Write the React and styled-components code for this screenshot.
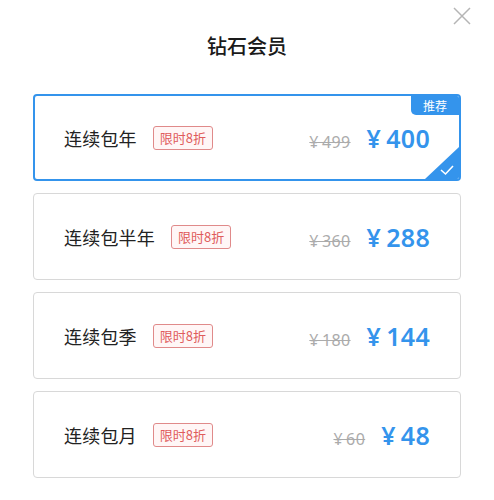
import React from "react";
import styled, { createGlobalStyle } from "styled-components";

const Global = createGlobalStyle`
  html, body { margin: 0; padding: 0; background: #fff; }
  body { font-family: "Noto Sans", "Noto Sans CJK SC", sans-serif; }
  * { box-sizing: border-box; }
`;

const BLUE = "#3494ec";

const Page = styled.div`
  position: relative;
  width: 494px;
  height: 500px;
  background: #fff;
  padding-top: 31px;
`;

const Close = styled.button`
  position: absolute;
  top: 6px;
  right: 23px;
  width: 19px;
  height: 19px;
  padding: 0;
  border: 0;
  background: transparent;
  display: flex;
  align-items: center;
  justify-content: center;
`;

const Title = styled.h1`
  margin: 0;
  text-align: center;
  font-family: "Noto Sans CJK SC", sans-serif;
  font-size: 20px;
  line-height: 30px;
  font-weight: 500;
  color: #1a1a1a;
`;

const List = styled.div`
  display: flex;
  flex-direction: column;
  gap: 12px;
  padding: 33px 33px 0;
`;

const Card = styled.div`
  position: relative;
  height: 87px;
  display: flex;
  align-items: center;
  border: ${(p) => (p.$active ? `2px solid ${BLUE}` : "1px solid #d8d8d8")};
  border-radius: 4px;
  padding: ${(p) => (p.$active ? "0 29px 0 29px" : "0 30px 0 30px")};
  overflow: hidden;
`;

const Name = styled.span`
  font-family: "Noto Sans CJK SC", sans-serif;
  font-size: 18px;
  color: #222;
  letter-spacing: 0.2px;
`;

const Tag = styled.span`
  margin-left: 16px;
  height: 24px;
  display: inline-flex;
  align-items: center;
  padding: 0 6px;
  border: 1px solid #e08a8a;
  border-radius: 3px;
  background: #fff6f6;
  color: #e05c5c;
  font-family: "Noto Sans CJK SC", sans-serif;
  font-size: 13px;
`;

const Prices = styled.div`
  margin-left: auto;
  display: flex;
  align-items: baseline;
  gap: 16px;
`;

const Old = styled.span`
  font-family: "Noto Sans", sans-serif;
  font-size: 16px;
  color: #ababab;
  text-decoration: line-through;
  text-decoration-thickness: 1px;
  letter-spacing: 0.4px;
  white-space: pre;
`;

const Price = styled.span`
  font-family: "Noto Sans", sans-serif;
  font-size: 25px;
  font-weight: 600;
  color: ${BLUE};
  letter-spacing: 0.3px;
`;

const Yen = styled.span`
  margin-right: 5px;
`;

const Badge = styled.div`
  position: absolute;
  top: 0;
  right: 0;
  width: 48px;
  height: 19px;
  background: ${BLUE};
  color: #fff;
  border-bottom-left-radius: 5px;
  font-family: "Noto Sans CJK SC", sans-serif;
  font-size: 12px;
  line-height: 19px;
  text-align: center;
`;

const Corner = styled.svg`
  position: absolute;
  right: 0;
  bottom: 0;
`;

const plans = [
  { name: "连续包年", old: "499", price: "400", active: true },
  { name: "连续包半年", old: "360", price: "288" },
  { name: "连续包季", old: "180", price: "144" },
  { name: "连续包月", old: "60", price: "48" },
];

export default function App() {
  return (
    <Page>
      <Global />
      <Close aria-label="关闭">
        <svg width="18" height="18" viewBox="0 0 18 18">
          <path d="M1 1L17 17M17 1L1 17" stroke="#b5b5b5" strokeWidth="1.5" fill="none" />
        </svg>
      </Close>
      <Title>钻石会员</Title>
      <List>
        {plans.map((p) => (
          <Card key={p.name} $active={p.active}>
            <Name>{p.name}</Name>
            <Tag>限时8折</Tag>
            <Prices>
              <Old>{`¥\u2009${p.old}`}</Old>
              <Price>
                <Yen>¥</Yen>
                {p.price}
              </Price>
            </Prices>
            {p.active && (
              <>
                <Badge>推荐</Badge>
                <Corner width="34" height="32" viewBox="0 0 34 32">
                  <path d="M34 0L34 32L0 32Z" fill={BLUE} />
                  <path d="M16 23L20.5 27L28 19" stroke="#fff" strokeWidth="1.6" fill="none" />
                </Corner>
              </>
            )}
          </Card>
        ))}
      </List>
    </Page>
  );
}
